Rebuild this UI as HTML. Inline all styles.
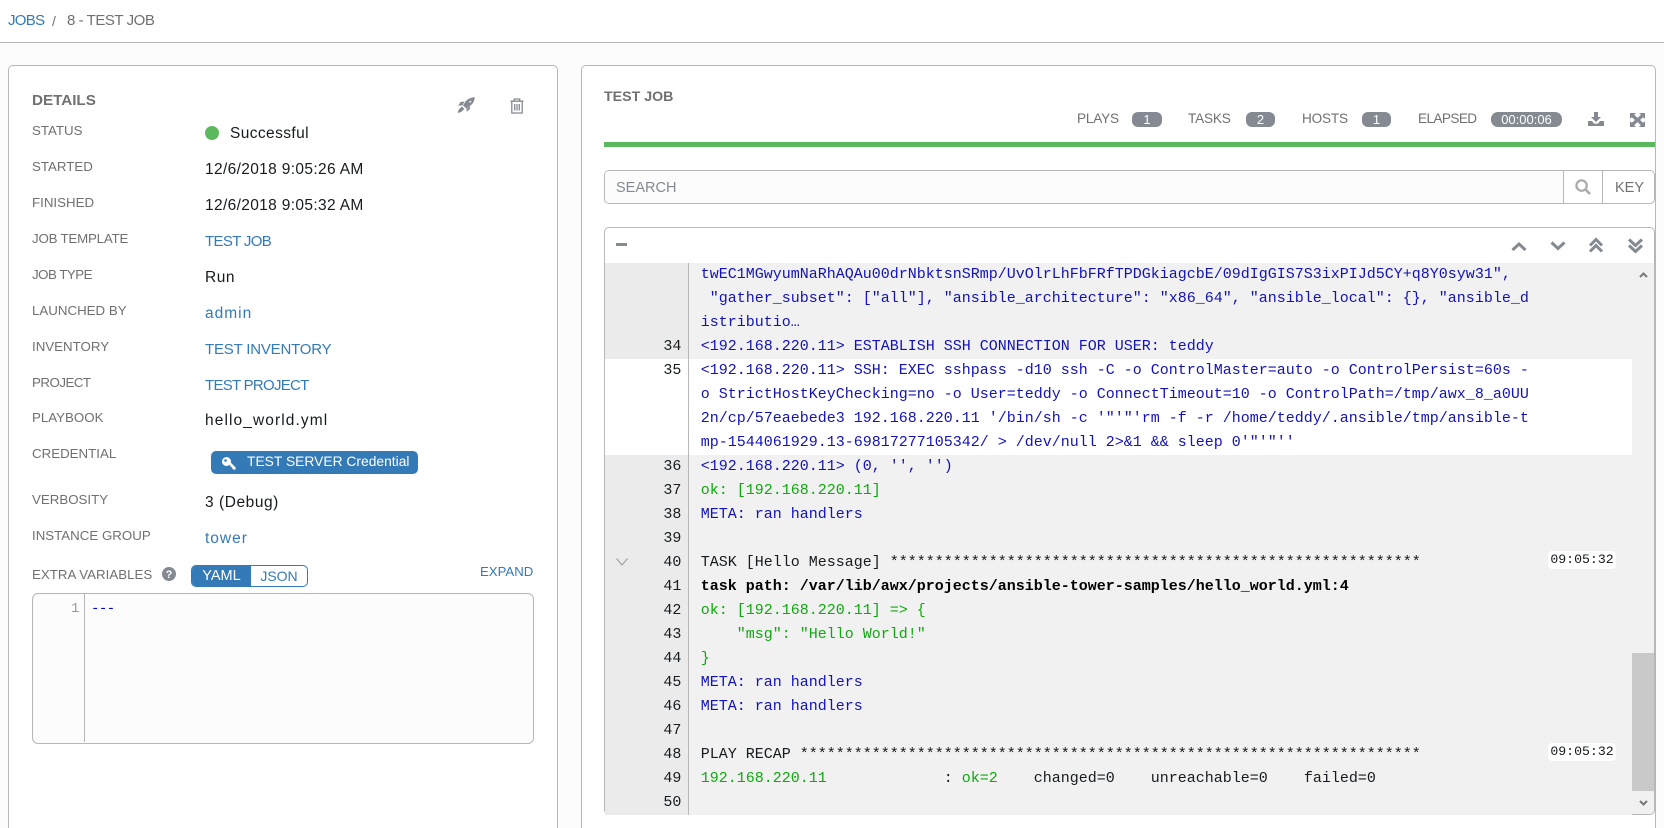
<!DOCTYPE html>
<html lang="en"><head><meta charset="utf-8"><title>Jobs</title>
<style>
html,body{margin:0;padding:0;width:1664px;height:828px;overflow:hidden;background:#fcfcfc}
body{position:relative;font-family:"Liberation Sans",sans-serif}
*{box-sizing:border-box}
.a{position:absolute}
.t{position:absolute;white-space:nowrap;line-height:20px;height:20px}
.l{font-size:13.3px;color:#707070;left:32px}
.v{font-size:15.5px;letter-spacing:.35px;color:#161b1f;left:205px}
.lk{color:#337ab7}
.b{background:#848992;border-radius:6px;color:#fff;font-size:13px;line-height:15px;height:15px;text-align:center;position:absolute;top:112px}
.s{font-size:13.6px;letter-spacing:-.2px;color:#707070;top:109px}
.log{position:absolute;left:605px;top:263px;width:1027px;font-family:"Liberation Mono",monospace;font-size:15px;line-height:24px;color:#161b1f;background:#f1f1f1}
.r{display:flex;min-height:24px}
.n{width:84px;flex:none;background:#ebebeb;border-right:1px solid #b7b7b7;text-align:right;padding-right:6.6px;position:relative}
.c{padding-left:11.7px;white-space:pre;flex:1}
.w,.w .n{background:#fff}
.bl{color:#1212b8}.g{color:#10a810}
.ts{position:absolute;left:1548px;width:68px;height:18px;background:#fff;border-radius:4px;font-family:"Liberation Mono",monospace;font-size:13.2px;line-height:18px;text-align:center;color:#161b1f}
</style></head><body>

<div class="a" style="left:0;top:0;width:1664px;height:43px;background:#fff;border-bottom:1px solid #b7b7b7"></div>
<div class="t lk" style="left:8px;top:11px;font-size:15px;letter-spacing:-.7px">JOBS</div>
<div class="t" style="left:52px;top:11px;font-size:14px;color:#707070">/</div>
<div class="t" style="left:67px;top:11px;font-size:15px;letter-spacing:-.45px;color:#707070">8 - TEST JOB</div>

<!-- left card -->
<div class="a" style="left:8px;top:65px;width:550px;height:800px;background:#fff;border:1px solid #b7b7b7;border-radius:5px"></div>
<div class="t" style="left:32px;top:91px;font-size:15.2px;font-weight:bold;color:#707070">DETAILS</div>
<svg class="a" style="left:457px;top:97px" width="18" height="16" viewBox="0 0 18 16" fill="#848992"><path d="M17.800 .1C13.500 .6 10.500 2 8.500 4.500L6 8.500l3.500 3.200 3.700-2.900C16.200 6.500 17.500 3.500 17.800 .1ZM7.500 4.500 3.500 5 1.200 8.800l4.400-.5ZM13.200 8.500l-.5 3.900-3.300 2.400.4-3.700ZM5 9.500 1.800 12.400 .6 16l3.600-1L7.500 12Z"/><circle cx="13.300" cy="4.700" r=".9" fill="#fff"/></svg>
<svg class="a" style="left:510px;top:98px" width="14" height="16" viewBox="0 0 14 16" fill="none" stroke="#848992" stroke-width="1.3"><path d="M.5 3.200h13M4.300 3V1h5.400v2M1.800 3.200V15h10.400V3.200M4.700 6v6.500M7 6v6.500M9.300 6v6.500"/></svg>

<div class="t l" style="top:121px">STATUS</div>
<div class="a" style="left:205px;top:126px;width:14px;height:14px;border-radius:50%;background:#5cb85c"></div>
<div class="t v" style="left:230px;top:124px;letter-spacing:.4px">Successful</div>
<div class="t l" style="top:157px">STARTED</div><div class="t v" style="top:160px">12/6/2018 9:05:26 AM</div>
<div class="t l" style="top:193px">FINISHED</div><div class="t v" style="top:196px">12/6/2018 9:05:32 AM</div>
<div class="t l" style="top:229px;letter-spacing:-.2px">JOB TEMPLATE</div><div class="t v" style="top:232px;font-size:15px;letter-spacing:-.66px;color:#337ab7">TEST JOB</div>
<div class="t l" style="top:265px;letter-spacing:-.5px">JOB TYPE</div><div class="t v" style="top:268px;letter-spacing:.5px">Run</div>
<div class="t l" style="top:301px">LAUNCHED BY</div><div class="t v" style="top:304px;letter-spacing:1px;color:#337ab7">admin</div>
<div class="t l" style="top:337px">INVENTORY</div><div class="t v" style="top:340px;font-size:15px;letter-spacing:-.2px;color:#337ab7">TEST INVENTORY</div>
<div class="t l" style="top:373px;letter-spacing:-.5px">PROJECT</div><div class="t v" style="top:376px;font-size:15px;letter-spacing:-.72px;color:#337ab7">TEST PROJECT</div>
<div class="t l" style="top:408px">PLAYBOOK</div><div class="t v" style="top:411px;letter-spacing:1.1px">hello_world.yml</div>
<div class="t l" style="top:444px">CREDENTIAL</div>
<div class="a" style="left:211px;top:451px;width:207px;height:23px;background:#337ab7;border-radius:5px"></div>
<svg class="a" style="left:222px;top:457px" width="14" height="13" viewBox="0 0 14 13" fill="#fff"><path d="M4.500 0a4.500 4.500 0 1 1-.01 9A4.500 4.500 0 0 1 4.500 0Zm-1 2.200a1.300 1.300 0 1 0 .01 2.600 1.300 1.300 0 0 0-.01-2.600Z" fill-rule="evenodd"/><path d="M7 6.500 8.400 5.200 13.600 10.400V12.600H11.300L10.400 11.500 9.500 10 8.400 9.200Z"/></svg>
<div class="t" style="left:247px;top:452px;font-size:13.8px;letter-spacing:.02px;color:#fff">TEST SERVER Credential</div>
<div class="t l" style="top:490px">VERBOSITY</div><div class="t v" style="top:493px;letter-spacing:.55px">3 (Debug)</div>
<div class="t l" style="top:526px">INSTANCE GROUP</div><div class="t v" style="top:529px;letter-spacing:1px;color:#337ab7">tower</div>

<div class="t l" style="top:565px">EXTRA VARIABLES</div>
<svg class="a" style="left:162px;top:567px" width="14" height="14" viewBox="0 0 14 14"><circle cx="7" cy="7" r="7" fill="#848992"/><text x="7" y="11" text-anchor="middle" font-family="Liberation Sans" font-weight="bold" font-size="11" fill="#fff">?</text></svg>
<div class="a" style="left:191px;top:565px;width:117px;height:22px;border:1px solid #337ab7;border-radius:5px;background:#fff;overflow:hidden">
  <div class="a" style="left:0;top:0;width:59px;height:20px;background:#337ab7;color:#fff;font-size:14.5px;line-height:20px;text-align:center">YAML</div>
  <div class="a" style="left:59px;top:0;width:56px;height:20px;color:#337ab7;font-size:14px;line-height:20px;text-align:center">JSON</div>
</div>
<div class="t lk" style="left:480px;top:562px;font-size:13.2px">EXPAND</div>

<div class="a" style="left:32px;top:593px;width:502px;height:151px;border:1px solid #b7b7b7;border-radius:6px;background:#fcfcfc"></div>
<div class="a" style="left:84px;top:594px;width:1px;height:148px;background:#b7b7b7"></div>
<div class="t" style="left:71px;top:599px;font-family:'Liberation Mono',monospace;font-size:14px;color:#999">1</div>
<div class="t" style="left:91px;top:599px;font-family:'Liberation Mono',monospace;font-size:14px;letter-spacing:-.5px;color:#0000ff">---</div>

<!-- right card -->
<div class="a" style="left:581px;top:65px;width:1075px;height:800px;background:#fff;border:1px solid #b7b7b7;border-radius:5px"></div>
<div class="t" style="left:604px;top:87px;font-size:14.2px;font-weight:bold;color:#707070">TEST JOB</div>

<div class="t s" style="left:1077px">PLAYS</div><div class="b" style="left:1132px;width:30px">1</div>
<div class="t s" style="left:1188px">TASKS</div><div class="b" style="left:1246px;width:29px">2</div>
<div class="t s" style="left:1302px">HOSTS</div><div class="b" style="left:1362px;width:29px">1</div>
<div class="t s" style="left:1418px;letter-spacing:-.6px">ELAPSED</div><div class="b" style="left:1491px;width:71px;border-radius:7px">00:00:06</div>
<svg class="a" style="left:1588px;top:112px" width="16" height="14" viewBox="0 0 16 14" fill="#848992"><path d="M6 0h4v5h3L8 10 3 5h3ZM0 9h4l2 2.600h4L12 9h4v5H0Z"/></svg>
<svg class="a" style="left:1630px;top:113px" width="15" height="14" viewBox="0 0 15 14" fill="#848992"><path d="M0 0h6L4.200 1.800 7.500 5 11 1.800 9 0h6v6l-1.800-1.800L10 7l3.200 2.800L15 8v6H9l1.800-1.800L7.500 9l-3.300 3.200L6 14H0V8l1.800 1.800L5 7 1.800 4.200 0 6Z"/></svg>

<div class="a" style="left:604px;top:142px;width:1051px;height:5px;background:#5cb85c"></div>

<!-- search -->
<div class="a" style="left:604px;top:170px;width:1051px;height:34px;border:1px solid #b7b7b7;border-radius:5px;background:#fff"></div>
<div class="a" style="left:605px;top:171px;width:959px;height:32px;background:#fcfcfc;border-right:1px solid #b7b7b7;border-radius:4px 0 0 4px"></div>
<div class="a" style="left:1602px;top:171px;width:1px;height:32px;background:#b7b7b7"></div>
<div class="t" style="left:616px;top:178px;font-size:14.5px;color:#848992">SEARCH</div>
<svg class="a" style="left:1575px;top:179px" width="16" height="16" viewBox="0 0 16 16" fill="none" stroke="#aaa" stroke-width="2.200"><circle cx="6.600" cy="6.600" r="5.200"/><path d="M10.500 10.500 15 15" stroke-width="2.600"/></svg>
<div class="t" style="left:1615px;top:178px;font-size:14.5px;color:#707070">KEY</div>

<!-- log header -->
<div class="a" style="left:604px;top:227px;width:1051px;height:37px;border:1px solid #b7b7b7;border-radius:5px 5px 0 0;background:#fff"></div>
<div class="a" style="left:616px;top:243px;width:11px;height:3px;background:#848992"></div>
<svg class="a" style="left:1509px;top:237px" width="140" height="18" viewBox="0 0 140 18" fill="none" stroke="#848992" stroke-width="3"><path d="M3.500 13 10 7l6.500 6"/><path d="M42.500 5.500l6.500 6 6.500-6"/><path d="M81 8.500 87 2.500l6 6M81 14.500 87 8.500l6 6"/><path d="M120 2.500l6.500 6 6.500-6M120 8.500l6.500 6 6.500-6"/></svg>

<!-- log -->
<div class="a" style="left:604px;top:263px;width:1051px;height:552px;border:1px solid #b7b7b7;border-top:0;border-radius:0 0 5px 5px;background:#f1f1f1"></div>
<div class="log">
<div class="r"><div class="n"></div><div class="c bl">twEC1MGwyumNaRhAQAu00drNbktsnSRmp/UvOlrLhFbFRfTPDGkiagcbE/09dIgGIS7S3ixPIJd5CY+q8Y0syw31",</div></div>
<div class="r"><div class="n"></div><div class="c bl"> "gather_subset": ["all"], "ansible_architecture": "x86_64", "ansible_local": {}, "ansible_d</div></div>
<div class="r"><div class="n"></div><div class="c bl">istributio…</div></div>
<div class="r"><div class="n">34</div><div class="c bl">&lt;192.168.220.11&gt; ESTABLISH SSH CONNECTION FOR USER: teddy</div></div>
<div class="r w" style="background:#fff"><div class="n">35</div><div class="c bl" style="background:#fff">&lt;192.168.220.11&gt; SSH: EXEC sshpass -d10 ssh -C -o ControlMaster=auto -o ControlPersist=60s -
o StrictHostKeyChecking=no -o User=teddy -o ConnectTimeout=10 -o ControlPath=/tmp/awx_8_a0UU
2n/cp/57eaebede3 192.168.220.11 '/bin/sh -c '"'"'rm -f -r /home/teddy/.ansible/tmp/ansible-t
mp-1544061929.13-69817277105342/ &gt; /dev/null 2&gt;&amp;1 &amp;&amp; sleep 0'"'"''</div></div>
<div class="r"><div class="n">36</div><div class="c bl">&lt;192.168.220.11&gt; (0, '', '')</div></div>
<div class="r"><div class="n">37</div><div class="c g">ok: [192.168.220.11]</div></div>
<div class="r"><div class="n">38</div><div class="c bl">META: ran handlers</div></div>
<div class="r"><div class="n">39</div><div class="c"></div></div>
<div class="r"><div class="n">40<svg class="a" style="left:11px;top:7px" width="12" height="8" viewBox="0 0 12 8" fill="none" stroke="#999" stroke-width="1"><path d="M.5 .5 6 7 11.500 .5"/></svg></div><div class="c">TASK [Hello Message] ***********************************************************</div></div>
<div class="r"><div class="n">41</div><div class="c" style="font-weight:bold;color:#000">task path: /var/lib/awx/projects/ansible-tower-samples/hello_world.yml:4</div></div>
<div class="r"><div class="n">42</div><div class="c g">ok: [192.168.220.11] =&gt; {</div></div>
<div class="r"><div class="n">43</div><div class="c g">    "msg": "Hello World!"</div></div>
<div class="r"><div class="n">44</div><div class="c g">}</div></div>
<div class="r"><div class="n">45</div><div class="c bl">META: ran handlers</div></div>
<div class="r"><div class="n">46</div><div class="c bl">META: ran handlers</div></div>
<div class="r"><div class="n">47</div><div class="c"></div></div>
<div class="r"><div class="n">48</div><div class="c">PLAY RECAP *********************************************************************</div></div>
<div class="r"><div class="n">49</div><div class="c"><span class="g">192.168.220.11</span>             : <span class="g">ok=2</span>    changed=0    unreachable=0    failed=0</div></div>
<div class="r"><div class="n">50</div><div class="c"></div></div>
</div>
<div class="ts" style="top:551px">09:05:32</div>
<div class="ts" style="top:743px">09:05:32</div>

<!-- scrollbar -->
<div class="a" style="left:1632px;top:653px;width:22px;height:138px;background:#c9c9c9"></div>
<svg class="a" style="left:1639px;top:272px" width="9" height="6" viewBox="0 0 9 6" fill="none" stroke="#777" stroke-width="2"><path d="M1 5 4.500 1.500 8 5"/></svg>
<svg class="a" style="left:1639px;top:800px" width="9" height="6" viewBox="0 0 9 6" fill="none" stroke="#777" stroke-width="2"><path d="M1 1 4.500 4.500 8 1"/></svg>
</body></html>
